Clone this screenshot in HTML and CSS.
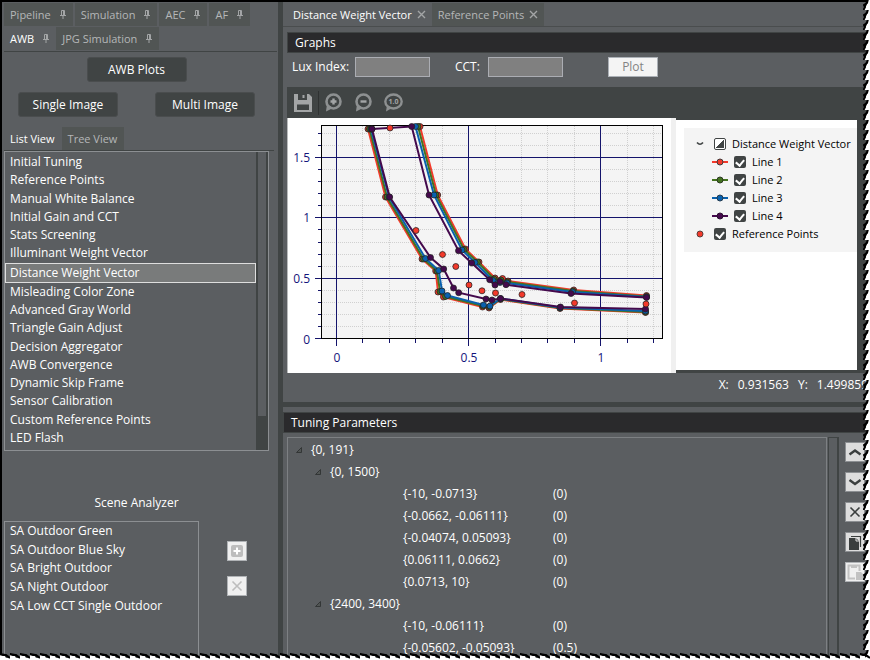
FILE: index.html
```html
<!DOCTYPE html>
<html lang="en">
<head>
<meta charset="utf-8">
<title>AWB Tuning</title>
<link rel="stylesheet" href="styles.css">
</head>
<body>
<svg class="defs" width="0" height="0" aria-hidden="true">
  <symbol id="pin" viewBox="0 0 8 11"><path d="M1 6.500H7M2.500 6V1.500H5.500V6M4.500 1.500V6M4 7V10" fill="none" stroke="currentColor"/></symbol>
  <symbol id="close" viewBox="0 0 9 9"><path d="M1 1L8 8M8 1L1 8" fill="none" stroke="currentColor" stroke-width="1.400"/></symbol>
  <symbol id="expander" viewBox="0 0 8 8"><path d="M6.500 1.500V6.500H1.500Z" fill="#515554" stroke="#333636"/></symbol>
</svg>

<aside class="side">
  <nav class="tabs" aria-label="Modules">
    <div class="tab-row">
      <button class="tab">Pipeline<svg class="pin"><use href="#pin"/></svg></button>
      <button class="tab">Simulation<svg class="pin"><use href="#pin"/></svg></button>
      <button class="tab">AEC<svg class="pin"><use href="#pin"/></svg></button>
      <button class="tab">AF<svg class="pin"><use href="#pin"/></svg></button>
    </div>
    <div class="tab-row joined">
      <button class="tab active">AWB<svg class="pin"><use href="#pin"/></svg></button>
      <button class="tab">JPG Simulation<svg class="pin"><use href="#pin"/></svg></button>
    </div>
  </nav>
  <div class="actions">
    <button class="action">AWB Plots</button>
    <div class="action-pair">
      <button class="action">Single Image</button>
      <button class="action">Multi Image</button>
    </div>
  </div>
  <div class="view-tabs">
    <button class="tab active">List View</button>
    <button class="tab">Tree View</button>
  </div>
  <div class="list-box">
    <ul class="modules">
      <li>Initial Tuning</li>
      <li>Reference Points</li>
      <li>Manual White Balance</li>
      <li>Initial Gain and CCT</li>
      <li>Stats Screening</li>
      <li>Illuminant Weight Vector</li>
      <li class="selected">Distance Weight Vector</li>
      <li>Misleading Color Zone</li>
      <li>Advanced Gray World</li>
      <li>Triangle Gain Adjust</li>
      <li>Decision Aggregator</li>
      <li>AWB Convergence</li>
      <li>Dynamic Skip Frame</li>
      <li>Sensor Calibration</li>
      <li>Custom Reference Points</li>
      <li>LED Flash</li>
    </ul>
    <div class="track"><div class="thumb"></div></div>
  </div>
  <h2 class="scene-title">Scene Analyzer</h2>
  <div class="scene">
    <div class="scene-box">
      <ul class="scene-list">
        <li>SA Outdoor Green</li>
        <li>SA Outdoor Blue Sky</li>
        <li>SA Bright Outdoor</li>
        <li>SA Night Outdoor</li>
        <li>SA Low CCT Single Outdoor</li>
      </ul>
    </div>
    <div class="scene-tools">
      <button class="square" disabled aria-label="Add"><svg viewBox="0 0 18 18"><rect x="3" y="3" width="12" height="12" rx="2" fill="#bdbdbd"/><path d="M9 5.500V12.500M5.500 9H12.500" stroke="#fff" stroke-width="2"/></svg></button>
      <button class="square" disabled aria-label="Remove"><svg viewBox="0 0 18 18"><path d="M4.500 4.500L13.500 13.500M13.500 4.500L4.500 13.500" stroke="#bdbdbd" stroke-width="1.600"/></svg></button>
    </div>
  </div>
</aside>

<main class="main">
  <div class="doc-tabs">
    <button class="tab active">Distance Weight Vector<svg class="close"><use href="#close"/></svg></button>
    <button class="tab">Reference Points<svg class="close"><use href="#close"/></svg></button>
  </div>

  <section class="graphs">
    <h2 class="bar">Graphs</h2>
    <form class="filters">
      <label for="lux">Lux Index:</label><input id="lux" type="text">
      <label for="cct" class="cct">CCT:</label><input id="cct" type="text">
      <button type="button" class="plot" disabled>Plot</button>
    </form>
    <div class="toolbar">
      <button aria-label="Save"><svg width="20" height="20" viewBox="0 0 20 20"><path d="M1 1H5V7H14V1H16L19 4V19H1Z" fill="#a3a5a6"/><path d="M9.500 2H11.500V5H9.500Z" fill="#a3a5a6"/><rect x="4" y="11.500" width="12" height="5.500" fill="#404444"/></svg></button>
      <span class="sep"></span>
      <button aria-label="Zoom in"><svg width="20" height="20" viewBox="0 0 20 20"><circle cx="10.500" cy="8.500" r="7" fill="none" stroke="#8d9091" stroke-width="2.600"/><path d="M4 11L3 18.500L10 15" fill="#8d9091"/><path d="M10.500 5.500V11.500M7.500 8.500H13.500" stroke="#a3a5a6" stroke-width="2.400"/></svg></button>
      <button aria-label="Zoom out"><svg width="20" height="20" viewBox="0 0 20 20"><circle cx="10.500" cy="8.500" r="7" fill="none" stroke="#8d9091" stroke-width="2.600"/><path d="M4 11L3 18.500L10 15" fill="#8d9091"/><path d="M7.500 8.500H13.500" stroke="#a3a5a6" stroke-width="2.400"/></svg></button>
      <button aria-label="Reset zoom"><svg width="20" height="20" viewBox="0 0 20 20"><ellipse cx="10.500" cy="8.500" rx="8.200" ry="7" fill="none" stroke="#8d9091" stroke-width="2.400"/><path d="M4 12L3 18.500L9 15" fill="#8d9091"/><text x="10.500" y="11" class="zoom-text">1.0</text></svg></button>
    </div>
    <div class="plot-area">
      <div class="chart-box">
        <svg class="chart" viewBox="288 118 383 255" role="img" aria-label="Distance weight vector chart">
          <rect x="321.500" y="125.500" width="341" height="213" fill="#f4f4f4"/>
          <path class="minor" d="M362.500 126V338M389.500 126V338M415.500 126V338M442.500 126V338M495.500 126V338M521.500 126V338M547.500 126V338M574.500 126V338M627.500 126V338M653.500 126V338M322 133.500H662M322 145.500H662M322 169.500H662M322 181.500H662M322 193.500H662M322 205.500H662M322 229.500H662M322 242.500H662M322 254.500H662M322 266.500H662M322 290.500H662M322 302.500H662M322 314.500H662M322 326.500H662"/>
          <path class="major" d="M336.500 126V346M468.500 126V346M600.500 126V346M315 157.500H662M315 217.500H662M315 278.500H662M315 338.500H321"/>
          <path class="major" d="M318 133.500H321M318 145.500H321M318 169.500H321M318 181.500H321M318 193.500H321M318 205.500H321M318 229.500H321M318 242.500H321M318 254.500H321M318 266.500H321M318 290.500H321M318 302.500H321M318 314.500H321M318 326.500H321M362.500 339V343M389.500 339V343M415.500 339V343M442.500 339V343M495.500 339V343M521.500 339V343M547.500 339V343M574.500 339V343M627.500 339V343M653.500 339V343"/>
          <rect x="321.500" y="125.500" width="341" height="213" fill="none" stroke="#000"/>
          <g id="series"></g>
          <g class="axis end"><text x="310" y="162">1.5</text><text x="310" y="222">1</text><text x="310" y="283">0.5</text><text x="310" y="344">0</text></g>
          <g class="axis mid"><text x="337" y="362">0</text><text x="469" y="362">0.5</text><text x="601" y="362">1</text></g>
        </svg>
      </div>
      <div class="legend-box">
        <ul class="legend">
          <li><svg class="mark" viewBox="0 0 16 10"><path d="M5 3.500Q8 7 11 3.500" fill="none" stroke="#404444" stroke-width="1.600"/></svg><input type="checkbox" id="all" class="mixed"><label for="all">Distance Weight Vector</label></li>
          <li class="child"><svg class="mark" viewBox="0 0 16 10"><path d="M0 5H16" stroke="#f33a2b" stroke-width="2"/><circle cx="8" cy="5" r="3" fill="#f33a2b" stroke="#403c3c"/></svg><input type="checkbox" id="l1" checked><label for="l1">Line 1</label></li>
          <li class="child"><svg class="mark" viewBox="0 0 16 10"><path d="M0 5H16" stroke="#44731f" stroke-width="2"/><circle cx="8" cy="5" r="3" fill="#44731f" stroke="#2c3a22"/></svg><input type="checkbox" id="l2" checked><label for="l2">Line 2</label></li>
          <li class="child"><svg class="mark" viewBox="0 0 16 10"><path d="M0 5H16" stroke="#0961ae" stroke-width="2"/><circle cx="8" cy="5" r="3" fill="#0961ae" stroke="#243c50"/></svg><input type="checkbox" id="l3" checked><label for="l3">Line 3</label></li>
          <li class="child"><svg class="mark" viewBox="0 0 16 10"><path d="M0 5H16" stroke="#44094c" stroke-width="2"/><circle cx="8" cy="5" r="3" fill="#44094c" stroke="#2b1030"/></svg><input type="checkbox" id="l4" checked><label for="l4">Line 4</label></li>
          <li><svg class="mark" viewBox="0 0 16 10"><circle cx="8" cy="5" r="3" fill="#f33a2b" stroke="#5a3c3a"/></svg><input type="checkbox" id="rp" checked><label for="rp">Reference Points</label></li>
        </ul>
      </div>
    </div>
    <div class="coords"><span>X:</span><span>0.931563</span><span>Y:</span><span>1.499859</span></div>
  </section>

  <section class="params">
    <h2 class="bar">Tuning Parameters</h2>
    <div class="params-body">
      <div class="tree">
        <div class="node"><svg class="expander"><use href="#expander"/></svg>{0, 191}</div>
        <div class="node sub"><svg class="expander"><use href="#expander"/></svg>{0, 1500}</div>
        <div class="leaf"><span>{-10, -0.0713}</span><span>(0)</span></div>
        <div class="leaf"><span>{-0.0662, -0.06111}</span><span>(0)</span></div>
        <div class="leaf"><span>{-0.04074, 0.05093}</span><span>(0)</span></div>
        <div class="leaf"><span>{0.06111, 0.0662}</span><span>(0)</span></div>
        <div class="leaf"><span>{0.0713, 10}</span><span>(0)</span></div>
        <div class="node sub"><svg class="expander"><use href="#expander"/></svg>{2400, 3400}</div>
        <div class="leaf"><span>{-10, -0.06111}</span><span>(0)</span></div>
        <div class="leaf"><span>{-0.05602, -0.05093}</span><span>(0.5)</span></div>
      </div>
      <div class="tree-track"></div>
      <div class="tree-tools">
        <button class="square" aria-label="Move up"><svg viewBox="0 0 18 18"><path d="M3.500 11.500L9 7.500L14.500 11.500" fill="none" stroke="#3a3e3e" stroke-width="2.400"/></svg></button>
        <button class="square" aria-label="Move down"><svg viewBox="0 0 18 18"><path d="M3.500 7L9 11L14.500 7" fill="none" stroke="#3a3e3e" stroke-width="2.400"/></svg></button>
        <button class="square" aria-label="Delete"><svg viewBox="0 0 18 18"><path d="M4.500 4.500L13.500 13.500M13.500 4.500L4.500 13.500" stroke="#3a3e3e" stroke-width="1.600"/></svg></button>
        <button class="square" aria-label="Copy"><svg viewBox="0 0 18 18"><path d="M3 5H10L13 8V17H3Z" fill="#3a3e3e"/><path d="M5 3.500H14.500V14" fill="none" stroke="#3a3e3e" stroke-width="1.200"/><path d="M10 5V8H13" fill="none" stroke="#ddd"/></svg></button>
        <button class="square" disabled aria-label="Paste"><svg viewBox="0 0 18 18"><path d="M9 15.500H2.500V2.500H13.500V8" fill="none" stroke="#c2c2c2" stroke-width="2"/><path d="M5 2H11V5H5ZM10 9H15L18 12V17H10Z" fill="#c2c2c2"/></svg></button>
      </div>
    </div>
  </section>
</main>

<svg class="torn right" aria-hidden="true">
  <defs><pattern id="tr" width="7" height="10" patternUnits="userSpaceOnUse"><path d="M5 0L4 3L1 5L2 7L0 10H7V0Z" fill="#fff"/><path d="M5 -1L4 3L1 5L2 7L0 11M4 2L2 6" fill="none" stroke="#000" stroke-width="2"/></pattern></defs>
  <rect width="100%" height="100%" fill="url(#tr)"/>
</svg>
<svg class="torn bottom" aria-hidden="true">
  <defs><pattern id="tb" width="10" height="7" patternUnits="userSpaceOnUse"><path d="M0 1L4 2L6 5L10 5V7H0Z" fill="#fff"/><path d="M-1 1L3 2L6 2L10 5M0 1L5 2L10 5" fill="none" stroke="#000" stroke-width="2"/></pattern></defs>
  <rect width="100%" height="100%" fill="url(#tb)"/>
</svg>
<script src="chart.js"></script>
</body>
</html>
```
FILE: styles.css
```css
* { box-sizing: border-box; }

body {
  margin: 0;
  height: 100vh;
  overflow: hidden;
  display: flex;
  border-top: 2px solid #000;
  border-left: 2px solid #000;
  background: #5b5e61;
  color: #fff;
  font: 12px/18px "Open Sans", "Noto Sans", sans-serif;
}

button, input { font: inherit; color: inherit; margin: 0; }
button { border: 0; padding: 0; background: none; }
ul { list-style: none; margin: 0; padding: 0; }
h2 { margin: 0; font: inherit; }
svg { display: block; flex: none; }
.defs { position: absolute; }

/* Tabs */
.tab {
  display: flex;
  align-items: center;
  gap: 8px;
  height: 23px;
  padding: 0 6px;
  background: #515554;
  color: #b5b7b8;
  font-size: 11px;
  white-space: nowrap;
}
.tab.active { background: none; color: #fff; }
.pin { width: 8px; height: 11px; color: #a3a5a6; }
.close { width: 9px; height: 9px; color: #a3a5a6; }

/* Left panel */
.side {
  flex: none;
  width: 276px;
  display: flex;
  flex-direction: column;
  padding: 1px 0 0 2px;
}
.tabs { border-bottom: 1px solid #404444; margin-right: 1px; }
.tab-row { display: flex; gap: 2px; margin-bottom: 1px; }
.tab-row.joined { gap: 0; }

.actions { padding: 5px 23px 0 14px; }
.action {
  display: block;
  width: 100px;
  height: 25px;
  margin: 0 auto;
  border: 1px solid #4a4d4e;
  border-radius: 3px;
  background: #404444;
}
.action-pair { display: flex; justify-content: space-between; margin-top: 10px; }
.action-pair .action { margin: 0; }

.view-tabs {
  display: flex;
  margin: 10px 4px 0 0;
  border-bottom: 1px solid #404444;
}
.view-tabs .tab { padding: 0 7px 0 6px; }

.list-box {
  display: flex;
  flex: none;
  margin-right: 9px;
  border: 1px solid #8c8f92;
}
.modules {
  flex: 1;
  height: 298px;
  padding: 1px 0 3px;
  display: grid;
  grid-auto-rows: 1fr;
}
.modules li { display: flex; align-items: center; padding: 0 5px; }
.modules .selected { padding: 0 4px; border: 1px solid #dedede; background: #797b7b; }
.track { width: 12px; padding: 0 2px; background: #404444; }
.thumb { height: 264px; background: #5b5e61; }

.scene-title { margin: 43px 9px 9px 0; text-align: center; }
.scene { flex: 1; display: flex; gap: 28px; }
.scene-box {
  width: 195px;
  padding: 0 5px;
  border: 1px solid #8c8f92;
  border-bottom: 0;
}
.scene-list { display: grid; grid-auto-rows: 1fr; align-items: center; height: 93px; }
.scene-tools { display: flex; flex-direction: column; gap: 15px; padding-top: 20px; }
.square { width: 20px; height: 20px; border: 1px solid #8c8f92; background: #ddd; }
.square:disabled { background: #f0f0f0; border-color: #b0b3b6; }
.square svg { width: 18px; height: 18px; }

/* Right panel */
.main {
  flex: 1;
  min-width: 0;
  display: flex;
  flex-direction: column;
  border-left: 5px solid #404444;
  padding-top: 1px;
}
.doc-tabs { display: flex; border-bottom: 1px solid #4a4d4e; }
.doc-tabs .tab { gap: 5px; }
.doc-tabs .active { padding-left: 10px; }

.bar {
  height: 21px;
  border: 1px solid #404444;
  background: #2a2a2c;
  padding: 0 7px;
  line-height: 19px;
}
.graphs { margin-top: 5px; border-bottom: 5px solid #404444; }
.graphs > * { margin-left: 4px; }

.filters { display: flex; align-items: center; height: 34px; padding: 0 0 6px 5px; }
.filters input {
  width: 75px;
  height: 20px;
  padding: 0 4px;
  border: 1px solid #abadb3;
  background: #808080;
}
.filters label { width: 63px; white-space: nowrap; }
.filters .cct { width: 33px; margin-left: 25px; }
.plot {
  width: 50px;
  height: 20px;
  margin-left: 45px;
  border: 1px solid #abb0b6;
  background: #f4f4f4;
  color: #838383;
  line-height: 18px;
}

.toolbar { display: flex; align-items: center; gap: 10px; height: 31px; padding-left: 6px; background: #404444; }
.toolbar .sep { width: 1px; height: 24px; margin: 0 -6px 0 -5px; background: #2f3232; }
.zoom-text { font-size: 7px; font-weight: 700; fill: #a3a5a6; text-anchor: middle; }

.plot-area { display: flex; background: #404444; padding-right: 13px; }
.chart-box { flex: 1; background: #fff; border-right: 5px solid #f0f0f0; border-left: 1px solid #b9bbbc; }
.chart { width: 100%; }
.minor { fill: none; stroke: #d0d0d0; stroke-dasharray: 1 1; }
.major { fill: none; stroke: #14146b; }
.axis { fill: #14147b; }
.end { text-anchor: end; }
.mid { text-anchor: middle; }

.legend-box {
  width: 181px;
  margin: 2px 0 3px;
  padding: 8px 0 0 8px;
  background: #fff;
  color: #000;
  font-size: 11px;
}
.legend { height: 124px; padding: 7px 0 0 8px; background: #f4f4f4; }
.legend li { display: flex; align-items: center; height: 18px; white-space: nowrap; }
.legend .child { padding-left: 20px; }
.legend .mark { width: 16px; height: 10px; margin-right: 6px; }
.legend input {
  appearance: none;
  flex: none;
  width: 12px;
  height: 12px;
  margin-right: 6px;
  border-radius: 2px;
  background: #404444;
  display: grid;
  place-items: center;
}
.legend input:checked::before {
  content: "";
  width: 6px;
  height: 4px;
  border: solid #fff;
  border-width: 0 0 2px 2px;
  transform: rotate(-50deg);
}
.legend .mixed {
  border: 1px solid #404444;
  background: linear-gradient(135deg, #fff 50%, #404444 50%) content-box, #fff;
  padding: 1px;
}

.coords { display: flex; justify-content: flex-end; gap: 9px; height: 29px; padding: 3px 2px 0 0; }

.params { flex: 1; min-height: 0; margin-top: 5px; display: flex; flex-direction: column; }
.params-body { flex: 1; min-height: 0; display: flex; padding: 4px 5px 0 4px; }
.tree {
  flex: 1;
  overflow: hidden;
  padding: 1px 0 0 7px;
  border: 1px solid #7d8083;
  border-bottom: 0;
}
.node, .leaf { display: flex; align-items: center; height: 22px; }
.expander { width: 8px; height: 8px; margin-right: 8px; }
.sub { padding-left: 19px; }
.leaf { padding-left: 108px; }
.leaf span:first-child { width: 150px; }
.tree-track { width: 11px; margin-left: 1px; border: 1px solid #404444; border-width: 1px 2px 0 1px; }
.tree-tools { display: flex; flex-direction: column; gap: 10px; padding: 5px 0 0 6px; }

/* Torn window edge */
.torn { position: fixed; }
.torn.right { top: 0; right: 0; width: 7px; height: 100%; }
.torn.bottom { bottom: 0; left: 0; width: 100%; height: 7px; }
```
FILE: chart.js
```js
// Draws the four boundary lines and the reference points in plot coordinates.
const lines = [
  { color: "#f33a2b",
    upper: "420,126.5 437.7,195 465.5,249 479,262 495,278 502.5,278.5 508,281 573.7,290 646.5,295.5",
    lower: "368,129 385.5,197 422,259 435.7,271 438,292 443.5,297 482.5,307 489,308 500.5,299.5 560,308.5 645.5,312.5" },
  { color: "#44731f",
    upper: "418,126.5 436,195 464,249.5 477.5,262 494,279 501,280 507.5,282 573,291 646.5,296.5",
    lower: "369.5,129 387,197 423.5,259 437,271 440,291.5 445.5,296.5 483,306 489.5,307 500.5,299 560,308 645.5,312" },
  { color: "#0961ae",
    upper: "415.5,126.5 434,195 462,250 475,262.5 493,280.5 500,282.5 507,283 572.5,292 646.5,297",
    lower: "371,129 389,197 425.5,258.5 438.7,270.5 442,291 447.5,295.5 483.5,305 490,306 500.5,298.5 560,307.5 645.5,311" },
  { color: "#44094c",
    upper: "372,129 411.7,126.5 429,195 458.5,250.7 471.7,263 489.7,279.7 495,285 500,281.5 506,284.7 571,293.5 646.5,297.5",
    lower: "372,129 389.7,197 430.5,257.5 443.7,269 453.5,288 458.7,292.7 486,299 492,300 500.5,298.5 560.5,307 645.5,309" }
];
const reference = "390,128 416,230.5 442.5,254.5 455.8,266.5 469,285 482,290.8 495.5,293 522,294.5 574.5,303 646,304";

const svgNs = "http://www.w3.org/2000/svg";
const root = document.getElementById("series");

function add(name, attrs) {
  const el = document.createElementNS(svgNs, name);
  for (const key in attrs) el.setAttribute(key, attrs[key]);
  root.append(el);
}

function dots(points, fill) {
  points.split(" ").forEach(p => {
    const [cx, cy] = p.split(",");
    add("circle", { cx, cy, r: 3, fill, stroke: "#222", "stroke-opacity": 0.75, "stroke-width": 1 });
  });
}

lines.forEach(line => {
  [line.upper, line.lower].forEach(points => {
    add("polyline", { points, fill: "none", stroke: line.color, "stroke-width": 2 });
    dots(points, line.color);
  });
});
dots(reference, "#f33a2b");
```
